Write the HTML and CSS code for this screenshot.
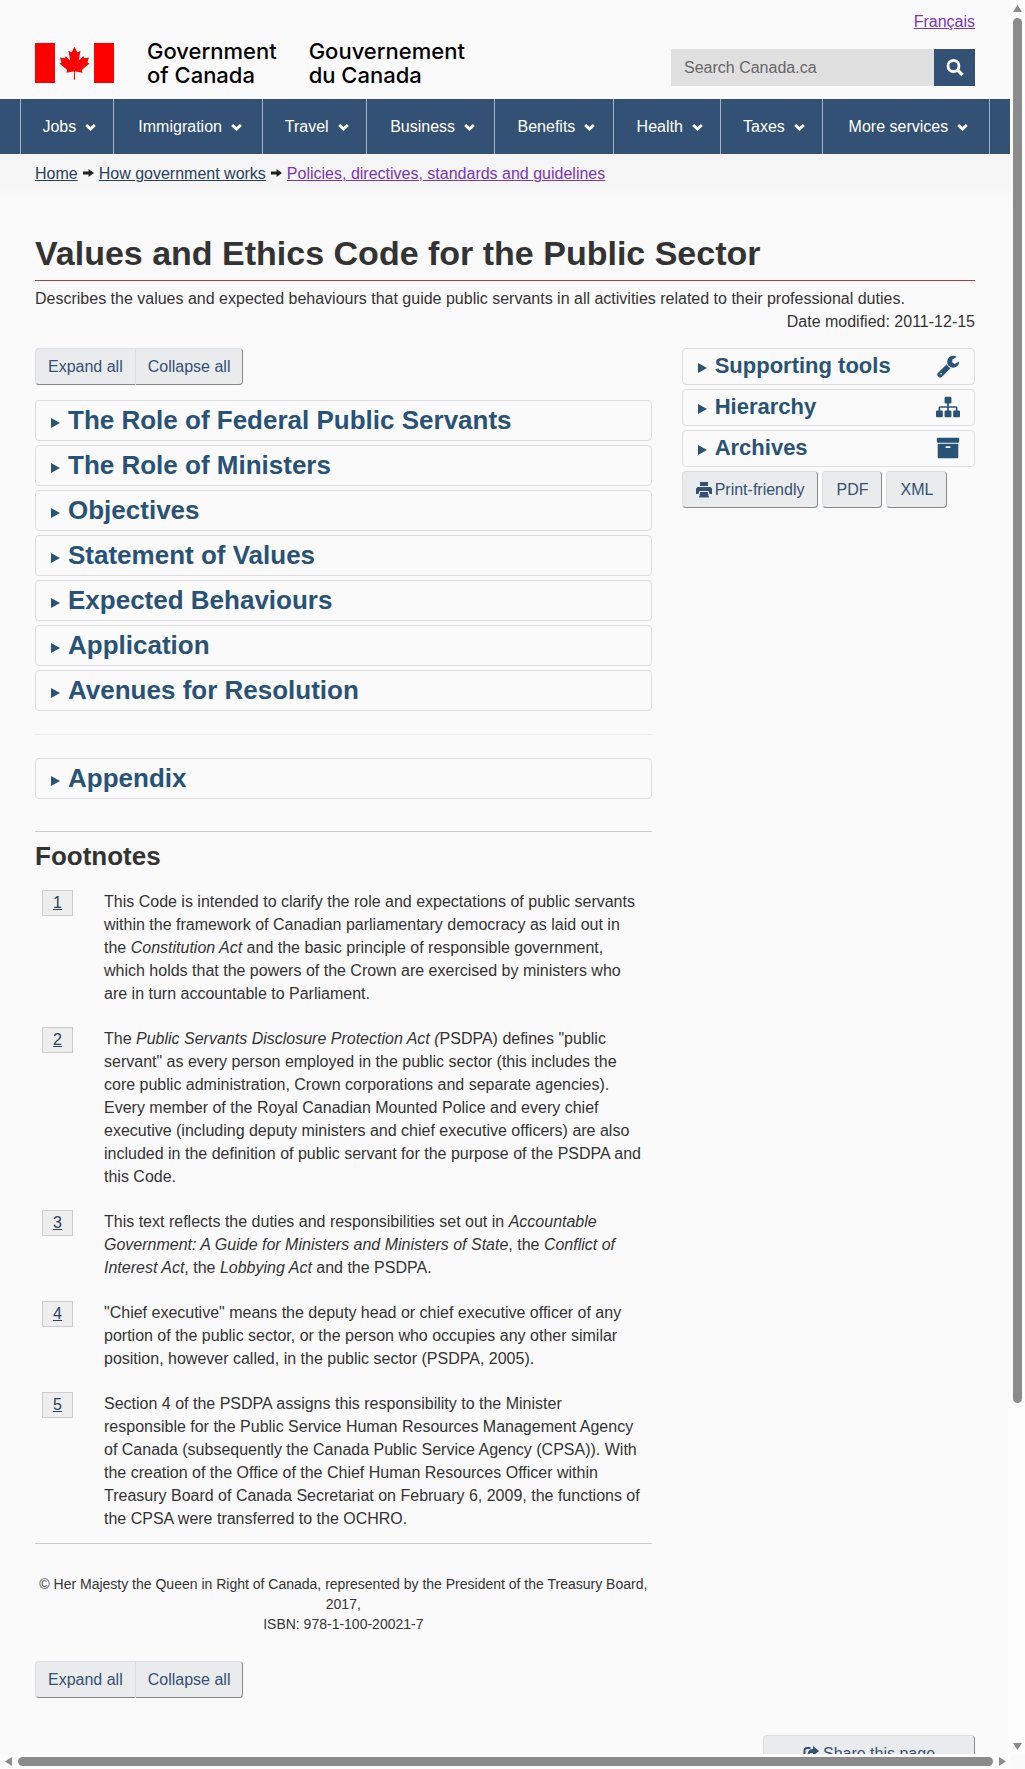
FILE: index.html
```html
<!DOCTYPE html>
<html lang="en">
<head>
<meta charset="utf-8">
<meta name="viewport" content="width=device-width, initial-scale=1">
<title>Values and Ethics Code for the Public Sector</title>
<link rel="stylesheet" href="styles.css">
</head>
<body>
<svg class="sprite" aria-hidden="true">
  <symbol id="chevron" viewBox="0 0 12 9"><path d="M0 3.400 2.200 1.200 6 4.600 9.800 1.200 12 3.400 6 9z"/></symbol>
  <symbol id="arrow" viewBox="0 0 11 8"><path d="M0 2.600h5.600V0L11 4 5.600 8V5.400H0z"/></symbol>
  <symbol id="caret" viewBox="0 0 9 10"><path d="M0 0 9 5 0 10z"/></symbol>
</svg>
<div class="window">
  <div class="page">
    <header class="container masthead">
      <a class="language" href="#" lang="fr">Français</a>
      <div class="brand-row">
        <div class="brand">
          <svg class="flag" viewBox="0 0 79 40" role="img" aria-label="Flag of Canada">
            <path fill="#f00" d="M0 0h20v40H0zM59 0h20v40H59z"/>
            <path fill="#f00" transform="translate(.6 .5) scale(.0081)" d="M4890 4430l-45-863a95 95 0 0 1 111-98l859 151-116-320a65 65 0 0 1 20-73l941-762-212-99a65 65 0 0 1-34-79l186-572-542 115a65 65 0 0 1-73-38l-105-247-423 454a65 65 0 0 1-111-57l204-1052-327 189a65 65 0 0 1-91-27l-332-652-332 652a65 65 0 0 1-91 27l-327-189 204 1052a65 65 0 0 1-111 57l-423-454-105 247a65 65 0 0 1-73 38l-542-115 186 572a65 65 0 0 1-34 79l-212 99 941 762a65 65 0 0 1 20 73l-116 320 859-151a95 95 0 0 1 111 98l-45 863z"/>
          </svg>
          <span class="wordmark">Government<br>of Canada</span>
          <span class="wordmark" lang="fr">Gouvernement<br>du Canada</span>
        </div>
        <form class="search">
          <input type="search" placeholder="Search Canada.ca" aria-label="Search Canada.ca">
          <button type="button" aria-label="Search">
            <svg width="18" height="18" viewBox="0 0 18 18"><circle cx="7.500" cy="7" r="5.500" fill="none" stroke="#fff" stroke-width="2.800"/><path d="M11.500 11 16.500 16" stroke="#fff" stroke-width="3.400"/></svg>
          </button>
        </form>
      </div>
    </header>

    <nav class="menu" aria-label="Site menu">
      <ul>
        <li><a href="#">Jobs <svg class="chevron"><use href="#chevron"/></svg></a></li>
        <li><a href="#">Immigration <svg class="chevron"><use href="#chevron"/></svg></a></li>
        <li><a href="#">Travel <svg class="chevron"><use href="#chevron"/></svg></a></li>
        <li><a href="#">Business <svg class="chevron"><use href="#chevron"/></svg></a></li>
        <li><a href="#">Benefits <svg class="chevron"><use href="#chevron"/></svg></a></li>
        <li><a href="#">Health <svg class="chevron"><use href="#chevron"/></svg></a></li>
        <li><a href="#">Taxes <svg class="chevron"><use href="#chevron"/></svg></a></li>
        <li><a href="#">More services <svg class="chevron"><use href="#chevron"/></svg></a></li>
      </ul>
    </nav>

    <nav class="breadcrumb" aria-label="Breadcrumb">
      <a href="#">Home</a>
      <svg class="arrow"><use href="#arrow"/></svg>
      <a href="#">How government works</a>
      <svg class="arrow"><use href="#arrow"/></svg>
      <a class="visited" href="#">Policies, directives, standards and guidelines</a>
    </nav>

    <main class="container">
      <h1>Values and Ethics Code for the Public Sector</h1>
      <p class="summary">Describes the values and expected behaviours that guide public servants in all activities related to their professional duties.</p>
      <p class="modified">Date modified: <time>2011-12-15</time></p>

      <div class="columns">
        <div class="content">
          <div class="button-group">
            <button type="button" class="btn">Expand all</button><button type="button" class="btn">Collapse all</button>
          </div>

          <section class="panels">
            <details><summary><svg class="caret"><use href="#caret"/></svg><h2>The Role of Federal Public Servants</h2></summary></details>
            <details><summary><svg class="caret"><use href="#caret"/></svg><h2>The Role of Ministers</h2></summary></details>
            <details><summary><svg class="caret"><use href="#caret"/></svg><h2>Objectives</h2></summary></details>
            <details><summary><svg class="caret"><use href="#caret"/></svg><h2>Statement of Values</h2></summary></details>
            <details><summary><svg class="caret"><use href="#caret"/></svg><h2>Expected Behaviours</h2></summary></details>
            <details><summary><svg class="caret"><use href="#caret"/></svg><h2>Application</h2></summary></details>
            <details><summary><svg class="caret"><use href="#caret"/></svg><h2>Avenues for Resolution</h2></summary></details>
          </section>
          <hr>
          <section class="panels">
            <details><summary><svg class="caret"><use href="#caret"/></svg><h2>Appendix</h2></summary></details>
          </section>

          <aside class="footnotes">
            <h2>Footnotes</h2>
            <ol>
              <li><a href="#">1</a><p>This Code is intended to clarify the role and expectations of public servants within the framework of Canadian parliamentary democracy as laid out in the <em>Constitution Act</em> and the basic principle of responsible government, which holds that the powers of the Crown are exercised by ministers who are in turn accountable to Parliament.</p></li>
              <li><a href="#">2</a><p>The <em>Public Servants Disclosure Protection Act (</em>PSDPA) defines "public servant" as every person employed in the public sector (this includes the core public administration, Crown corporations and separate agencies). Every member of the Royal Canadian Mounted Police and every chief executive (including deputy ministers and chief executive officers) are also included in the definition of public servant for the purpose of the PSDPA and this Code.</p></li>
              <li><a href="#">3</a><p>This text reflects the duties and responsibilities set out in <em>Accountable Government: A Guide for Ministers and Ministers of State</em>, the <em>Conflict of Interest Act</em>, the <em>Lobbying Act</em> and the PSDPA.</p></li>
              <li><a href="#">4</a><p>"Chief executive" means the deputy head or chief executive officer of any portion of the public sector, or the person who occupies any other similar position, however called, in the public sector (PSDPA, 2005).</p></li>
              <li><a href="#">5</a><p>Section 4 of the PSDPA assigns this responsibility to the Minister responsible for the Public Service Human Resources Management Agency of Canada (subsequently the Canada Public Service Agency (CPSA)). With the creation of the Office of the Chief Human Resources Officer within Treasury Board of Canada Secretariat on February 6, 2009, the functions of the CPSA were transferred to the OCHRO.</p></li>
            </ol>
          </aside>

          <p class="copyright">© Her Majesty the Queen in Right of Canada, represented by the President of the Treasury Board, 2017,<br>ISBN: 978-1-100-20021-7</p>

          <div class="button-group">
            <button type="button" class="btn">Expand all</button><button type="button" class="btn">Collapse all</button>
          </div>
        </div>

        <aside class="sidebar">
          <div class="panels">
            <details><summary><svg class="caret"><use href="#caret"/></svg><h3>Supporting tools</h3><svg class="icon" viewBox="0 0 1792 1792"><path d="M448 1472q0-26-19-45t-45-19-45 19-19 45 19 45 45 19 45-19 19-45zm644-420l-682 682q-37 37-90 37-52 0-91-37l-106-108q-38-36-38-90 0-53 38-91l681-681q39 98 114.500 173.500t173.500 114.500zm634-435q0 39-23 106-47 134-164.500 217.500t-258.500 83.500q-185 0-316.500-131.500t-131.500-316.500 131.500-316.500 316.500-131.500q58 0 121.500 16.500t107.500 46.500q16 11 16 28t-16 28l-293 169v224l193 107q5-3 79-48.500t135.500-81 70.500-35.500q15 0 23.500 10t8.500 25z"/></svg></summary></details>
            <details><summary><svg class="caret"><use href="#caret"/></svg><h3>Hierarchy</h3><svg class="icon" viewBox="0 0 1792 1792"><path d="M1792 1248v320q0 40-28 68t-68 28h-320q-40 0-68-28t-28-68v-320q0-40 28-68t68-28h96v-192h-512v192h96q40 0 68 28t28 68v320q0 40-28 68t-68 28h-320q-40 0-68-28t-28-68v-320q0-40 28-68t68-28h96v-192h-512v192h96q40 0 68 28t28 68v320q0 40-28 68t-68 28h-320q-40 0-68-28t-28-68v-320q0-40 28-68t68-28h96v-192q0-52 38-90t90-38h512v-192h-96q-40 0-68-28t-28-68v-320q0-40 28-68t68-28h320q40 0 68 28t28 68v320q0 40-28 68t-68 28h-96v192h512q52 0 90 38t38 90v192h96q40 0 68 28t28 68z"/></svg></summary></details>
            <details><summary><svg class="caret"><use href="#caret"/></svg><h3>Archives</h3><svg class="icon" viewBox="0 0 1792 1792"><path d="M1088 832q0-26-19-45t-45-19h-256q-26 0-45 19t-19 45 19 45 45 19h256q26 0 45-19t19-45zm576-192v960q0 26-19 45t-45 19h-1408q-26 0-45-19t-19-45v-960q0-26 19-45t45-19h1408q26 0 45 19t19 45zm64-448v256q0 26-19 45t-45 19h-1536q-26 0-45-19t-19-45v-256q0-26 19-45t45-19h1536q26 0 45 19t19 45z"/></svg></summary></details>
          </div>
          <div class="formats">
            <button type="button" class="btn"><svg width="16" height="16" viewBox="0 0 16 16"><path d="M4 0h8v4H4zM1.500 5h13L16 6.500V12h-2.500L12.500 9h-9l-1 3H0V6.500zM4.300 10h7.400l1.300 5.500H3z"/></svg>Print-friendly</button>
            <button type="button" class="btn">PDF</button>
            <button type="button" class="btn">XML</button>
          </div>
        </aside>
      </div>

      <div class="share">
        <button type="button" class="btn"><svg width="16" height="16" viewBox="0 0 16 16"><path d="M10 0l6 5-6 5V7C7 7 5.500 8 4.500 10.500 4 6 6 3 10 3z"/><path d="M7.500 2H4Q1.500 2 1.500 4.500v7Q1.500 14 4 14h7q2.500 0 2.500-2.500V10" fill="none" stroke="currentColor" stroke-width="2"/></svg>Share this page</button>
      </div>
    </main>
  </div>

  <div class="scrollbar vertical" aria-hidden="true">
    <svg viewBox="0 0 9 7"><path d="M4.500 0 9 7H0z"/></svg>
    <div class="track"><div class="thumb"></div></div>
    <svg viewBox="0 0 9 7"><path d="M0 0h9L4.500 7z"/></svg>
  </div>
  <div class="scrollbar horizontal" aria-hidden="true">
    <svg viewBox="0 0 7 9"><path d="M7 0v9L0 4.500z"/></svg>
    <div class="track"><div class="thumb"></div></div>
    <svg viewBox="0 0 7 9"><path d="M0 0l7 4.500L0 9z"/></svg>
  </div>
</div>
</body>
</html>
```
FILE: styles.css
```css
* { box-sizing: border-box; }

body {
  margin: 0;
  background: #fafafa;
  color: #333;
  font: 16px/23px "Liberation Sans", Arial, sans-serif;
}

h1, h2, h3, p, ul, ol { margin: 0; padding: 0; }
ul, ol { list-style: none; }
a { color: #284162; }
svg { display: block; flex: none; }
button, input { font: inherit; }
.sprite { display: none; }

.window {
  display: grid;
  grid-template: minmax(0, 1fr) 15px / minmax(0, 1fr) 15px;
  height: 100vh;
}
.page { overflow: hidden; }
.container { padding: 0 35px; }

/* Header */
.masthead {
  display: flex;
  flex-direction: column;
  padding-top: 10px;
  padding-bottom: 13px;
}
.language { align-self: flex-end; color: #7834bc; }
.brand-row {
  display: flex;
  justify-content: space-between;
  align-items: flex-end;
  padding-top: 6px;
}
.brand { display: flex; align-items: center; height: 47px; }
.flag { width: 79px; height: 40px; margin-right: 33px; }
.wordmark {
  margin-right: 32px;
  color: #000;
  font-family: Inter, "Liberation Sans", sans-serif;
  font-size: 22px;
  font-weight: 500;
  line-height: 24px;
}
.search { display: flex; height: 37px; }
.search input {
  width: 263px;
  border: 0;
  padding: 0 13px;
  background: #e0e0e0;
  color: #555;
}
.search input::placeholder { color: #666; opacity: 1; }
.search button {
  display: grid;
  place-items: center;
  width: 41px;
  border: 0;
  padding: 0;
  background: #335075;
}

.menu { padding: 0 20px; background: #335075; }
.menu ul {
  display: table;
  width: 100%;
  border-left: 1px solid #a8b4c4;
}
.menu li { display: table-cell; border-right: 1px solid #a8b4c4; }
.menu a {
  display: flex;
  justify-content: center;
  align-items: center;
  gap: 9px;
  height: 55px;
  padding: 0 11px 0 16px;
  color: #fff;
  text-decoration: none;
  white-space: nowrap;
}
.chevron { width: 11px; height: 8px; fill: #fff; }

.breadcrumb {
  display: flex;
  align-items: center;
  gap: 5px;
  height: 50px;
  padding: 0 35px 12px;
  background: linear-gradient(#f5f5f5, #f6f6f6 60%, #fafafa);
}
.breadcrumb .visited { color: #7834bc; }
.arrow { width: 11px; height: 8px; fill: #222; }

/* Title */
h1 {
  margin-top: 28px;
  padding-bottom: 5px;
  border-bottom: 1px solid #af3c43;
  font-size: 34px;
  line-height: 43px;
}
.summary { margin-top: 6px; }
.modified { text-align: right; }

.columns {
  display: grid;
  grid-template-columns: calc((100% + 30px) * 2 / 3 - 30px) minmax(0, 1fr);
  gap: 30px;
  margin-top: 15px;
}

/* Buttons */
.btn {
  display: flex;
  justify-content: center;
  align-items: center;
  gap: 4px;
  height: 37px;
  border: 1px solid #dcdee1;
  border-right-color: #888;
  border-bottom-color: #888;
  border-radius: 4px;
  padding: 0 12px;
  background: #eaebed;
  color: #335075;
  white-space: nowrap;
}
.btn svg { fill: currentColor; }
.button-group { display: flex; }
.button-group .btn:first-child {
  border-right: 0;
  border-radius: 4px 0 0 4px;
}
.button-group .btn:last-child {
  border-left-color: #dcdee1;
  border-radius: 0 4px 4px 0;
}

/* Expandable panels */
.panels { display: grid; gap: 4px; }
.content .panels { margin-top: 15px; }
.content hr {
  margin: 23px 0;
  border: 0;
  border-top: 1px solid #eee;
}
.content hr + .panels { margin-top: 0; }
details { border: 1px solid #ddd; border-radius: 4px; }
summary {
  display: flex;
  align-items: center;
  gap: 8px;
  height: 39px;
  padding: 0 15px;
  color: #295376;
  list-style: none;
}
.caret { width: 9px; height: 10px; margin-top: 5px; fill: #295376; }
h2 { font-size: 26px; line-height: 31px; }
h3 { flex: 1; font-size: 22px; line-height: 27px; }
.sidebar summary { height: 35px; padding: 0 14px 2px 15px; }
.icon { width: 24px; height: 24px; fill: #295376; }
.formats { display: flex; gap: 4px; margin-top: 4px; }
.formats .btn { gap: 3px; padding: 0 13px; }

/* Footnotes */
.footnotes {
  margin-top: 32px;
  border-top: 1px solid #ccc;
  border-bottom: 1px solid #ccc;
  padding: 9px 8px 13px 0;
}
.footnotes ol {
  display: grid;
  gap: 22px;
  padding: 18px 0 0 7px;
}
.footnotes li { display: flex; align-items: flex-start; }
.footnotes li a {
  width: 31px;
  margin-right: 31px;
  border: 1px solid #ccc;
  background: #eee;
  line-height: 24px;
  text-align: center;
}
.footnotes li p { flex: 1; }

.copyright {
  margin: 30px 0 27px;
  font-size: 14px;
  line-height: 20px;
  text-align: center;
}

.share { display: flex; justify-content: flex-end; margin-top: 37px; }
.share .btn { width: 212px; }

/* Scrollbars */
.scrollbar { display: flex; align-items: center; background: #fcfcfc; }
.scrollbar svg { fill: #8b8b8b; }
.scrollbar .track { flex: 1; }
.scrollbar .thumb { border-radius: 5px; background: #8b8b8b; }
.vertical { flex-direction: column; gap: 6px; padding: 5px 0 4px; }
.vertical svg { width: 9px; height: 7px; }
.vertical .thumb { width: 9px; height: calc(80% + 10px); }
.horizontal { gap: 6px; padding: 0 4px 0 5px; }
.horizontal svg { width: 7px; height: 9px; }
.horizontal .thumb { height: 9px; }
```
